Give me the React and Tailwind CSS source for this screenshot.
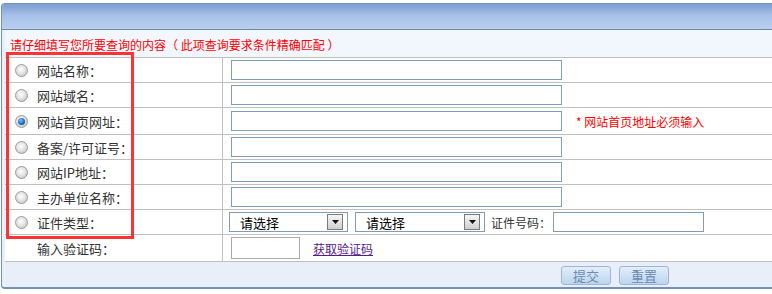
import React from 'react';

const font = "font-['SimSun','Noto_Sans_CJK_SC','Noto_Sans',sans-serif]";

function Radio({ checked }) {
  return (
    <div className="w-[13px] h-[13px] rounded-full border border-[#9a9a9a] bg-[radial-gradient(circle_at_45%_40%,#ffffff_0%,#e4e4e4_45%,#b8b8b8_100%)] flex items-center justify-center shrink-0">
      {checked && (
        <div className="w-[7px] h-[7px] rounded-full bg-[radial-gradient(circle_at_40%_35%,#7cc3f5_0%,#1d6fc0_55%,#0b3f7a_100%)]" />
      )}
    </div>
  );
}

function TextBox({ className = 'w-[331px]' }) {
  return <div className={`${className} h-[20px] border border-[#7f9db9] bg-white`} />;
}

function Select({ className }) {
  return (
    <div className={`${className} h-[20px] border border-[#7f9db9] bg-white flex items-center justify-between pl-[10px] pr-[4px]`}>
      <span className="text-[13px] text-black leading-none">请选择</span>
      <div className="w-[16px] h-[16px] border border-[#7a7a7a] bg-gradient-to-b from-[#f6f6f6] to-[#cfcfcf] flex items-center justify-center">
        <svg width="7" height="4" viewBox="0 0 7 4">
          <path d="M0 0h7L3.5 4z" fill="#111" />
        </svg>
      </div>
    </div>
  );
}

function Row({ h, radio, checked, label, children, right = 'pl-[8px]' }) {
  return (
    <div className={`flex border-b border-[#c0c0c0] ${h}`}>
      <div className="w-[218px] border-r border-[#c0c0c0] flex items-center pl-[10px] bg-white">
        {radio ? <Radio checked={checked} /> : <div className="w-[13px]" />}
        <span className="ml-[9px] text-[13px] text-[#333] pt-[2px]">{label}</span>
      </div>
      <div className={`flex-1 flex items-center bg-white ${right}`}>{children}</div>
    </div>
  );
}

function Button({ children }) {
  return (
    <div className="w-[50px] h-[19px] rounded-[3px] border border-[#9cb6d6] bg-gradient-to-b from-[#e3eefa] to-[#bcd5ee] text-[#6d8bb6] text-[13px] flex items-center justify-center leading-none">
      {children}
    </div>
  );
}

export default function App() {
  return (
    <div className={`relative w-[772px] h-[294px] overflow-hidden bg-white ${font}`}>
      <div className="pt-[3px] pl-[1px]">
        <div className="w-[820px] border-l border-t border-b-2 border-[#7190ba] rounded-tl-[4px] rounded-bl-[4px] bg-[#e9eff8] overflow-hidden">
          {/* header band */}
          <div className="h-[26px] border-b border-[#6f8ab2] bg-[linear-gradient(#7b9dd0,#a6c0e8_45%,#b9cff0)]" />

          <div className="pl-[3px]">
            {/* intro */}
            <div className="h-[28px] border-b border-[#c0c0c0] bg-[#f2f6fd] flex items-center pl-[5px] pt-[2px]">
              <span className="text-[12px] text-[#ff0000] whitespace-pre">
                请仔细填写您所要查询的内容（ 此项查询要求条件精确匹配 ）
              </span>
            </div>

            <Row h="h-[25px]" radio label="网站名称：">
              <TextBox />
            </Row>
            <Row h="h-[25px]" radio label="网站域名：">
              <TextBox />
            </Row>
            <Row h="h-[27px]" radio checked label="网站首页网址：">
              <TextBox />
              <span className="ml-[14px] text-[12px] text-[#ff0000] pt-[2px]">* 网站首页地址必须输入</span>
            </Row>
            <Row h="h-[25px]" radio label="备案/许可证号：">
              <TextBox />
            </Row>
            <Row h="h-[25px]" radio label="网站IP地址：">
              <TextBox />
            </Row>
            <Row h="h-[25px]" radio label="主办单位名称：">
              <TextBox />
            </Row>
            <Row h="h-[25px]" radio label="证件类型：" right="pl-[6px]">
              <Select className="w-[119px]" />
              <div className="w-[7px]" />
              <Select className="w-[130px]" />
              <span className="ml-[6px] text-[12px] text-[#333] pt-[2px]">证件号码：</span>
              <div className="ml-[2px]">
                <TextBox className="w-[151px]" />
              </div>
            </Row>
            <Row h="h-[27px]" label="输入验证码：">
              <div className="w-[69px] h-[22px] border border-[#a9a9a9] bg-white" />
              <a className="ml-[13px] text-[12px] text-[#551a8b] underline pt-[2px]">获取验证码</a>
            </Row>

            {/* footer band */}
            <div className="h-[25px] flex items-start pt-[4px] pl-[556px] gap-[8px]">
              <Button>提交</Button>
              <Button>重置</Button>
            </div>
          </div>
        </div>
      </div>

      {/* red annotation box */}
      <div className="absolute left-[6px] top-[52px] w-[128px] h-[187px] border-[3px] border-[#ff3333]" />
    </div>
  );
}
